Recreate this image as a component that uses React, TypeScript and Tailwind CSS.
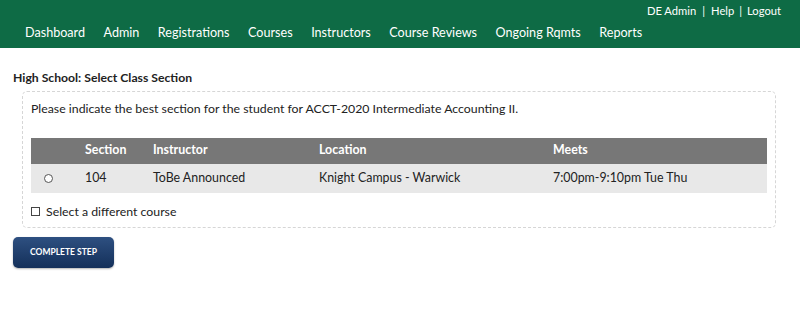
const navItems = [
  "Dashboard",
  "Admin",
  "Registrations",
  "Courses",
  "Instructors",
  "Course Reviews",
  "Ongoing Rqmts",
  "Reports",
];

const Header = () => (
  <header className="h-[48px] bg-[#0e6b45] text-white">
    <div className="flex h-[22px] items-center justify-end pr-[19px] pt-[1px] text-[11.2px]">
      <span>DE Admin</span>
      <span className="mx-[6px]">|</span>
      <span>Help</span>
      <span className="mx-[5px]">|</span>
      <span>Logout</span>
    </div>
    <nav className="flex h-[22px] items-center gap-[18.5px] pl-[25px] text-[12.6px]">
      {navItems.map((item) => (
        <span key={item}>{item}</span>
      ))}
    </nav>
  </header>
);

const SectionTable = () => (
  <table className="w-full border-collapse text-[12.4px] text-[#222]">
    <thead>
      <tr className="h-[26px] bg-[#777777] text-left font-bold text-white">
        <th className="w-[54px]" />
        <th className="w-[68px] font-bold">Section</th>
        <th className="w-[166px] font-bold">Instructor</th>
        <th className="w-[234px] font-bold">Location</th>
        <th className="font-bold">Meets</th>
      </tr>
    </thead>
    <tbody>
      <tr className="h-[29px] bg-[#e8e8e8]">
        <td className="pl-[13px]">
          <span className="block h-[9px] w-[9px] rounded-full border border-[#555] bg-white" />
        </td>
        <td>104</td>
        <td>ToBe Announced</td>
        <td>Knight Campus - Warwick</td>
        <td>7:00pm-9:10pm Tue Thu</td>
      </tr>
    </tbody>
  </table>
);

export default function App() {
  return (
    <div className="h-[318px] w-[800px] bg-white font-['Lato',sans-serif]">
      <Header />
      <main className="px-[13px] pt-[21px]">
        <h2 className="text-[12.2px] font-bold text-[#222]">High School: Select Class Section</h2>
        <section className="mt-[4px] ml-[9px] w-[754px] rounded-[5px] border border-dashed border-[#d6d6d6] px-[8px] pb-[6px] pt-[8px]">
          <p className="text-[12.3px] text-[#222]">
            Please indicate the best section for the student for ACCT-2020 Intermediate Accounting II.
          </p>
          <div className="mt-[19px]">
            <SectionTable />
          </div>
          <label className="mt-[10px] flex items-center gap-[6px] text-[12.3px] text-[#222]">
            <span className="block h-[9px] w-[9px] border border-[#444] bg-white" />
            Select a different course
          </label>
        </section>
        <button className="mt-[9px] h-[31px] w-[101px] rounded-[5px] bg-gradient-to-b from-[#2e5081] to-[#14305a] text-[8.5px] font-bold text-white shadow-[0_1px_2px_rgba(0,0,0,0.3)]">
          COMPLETE STEP
        </button>
      </main>
    </div>
  );
}
